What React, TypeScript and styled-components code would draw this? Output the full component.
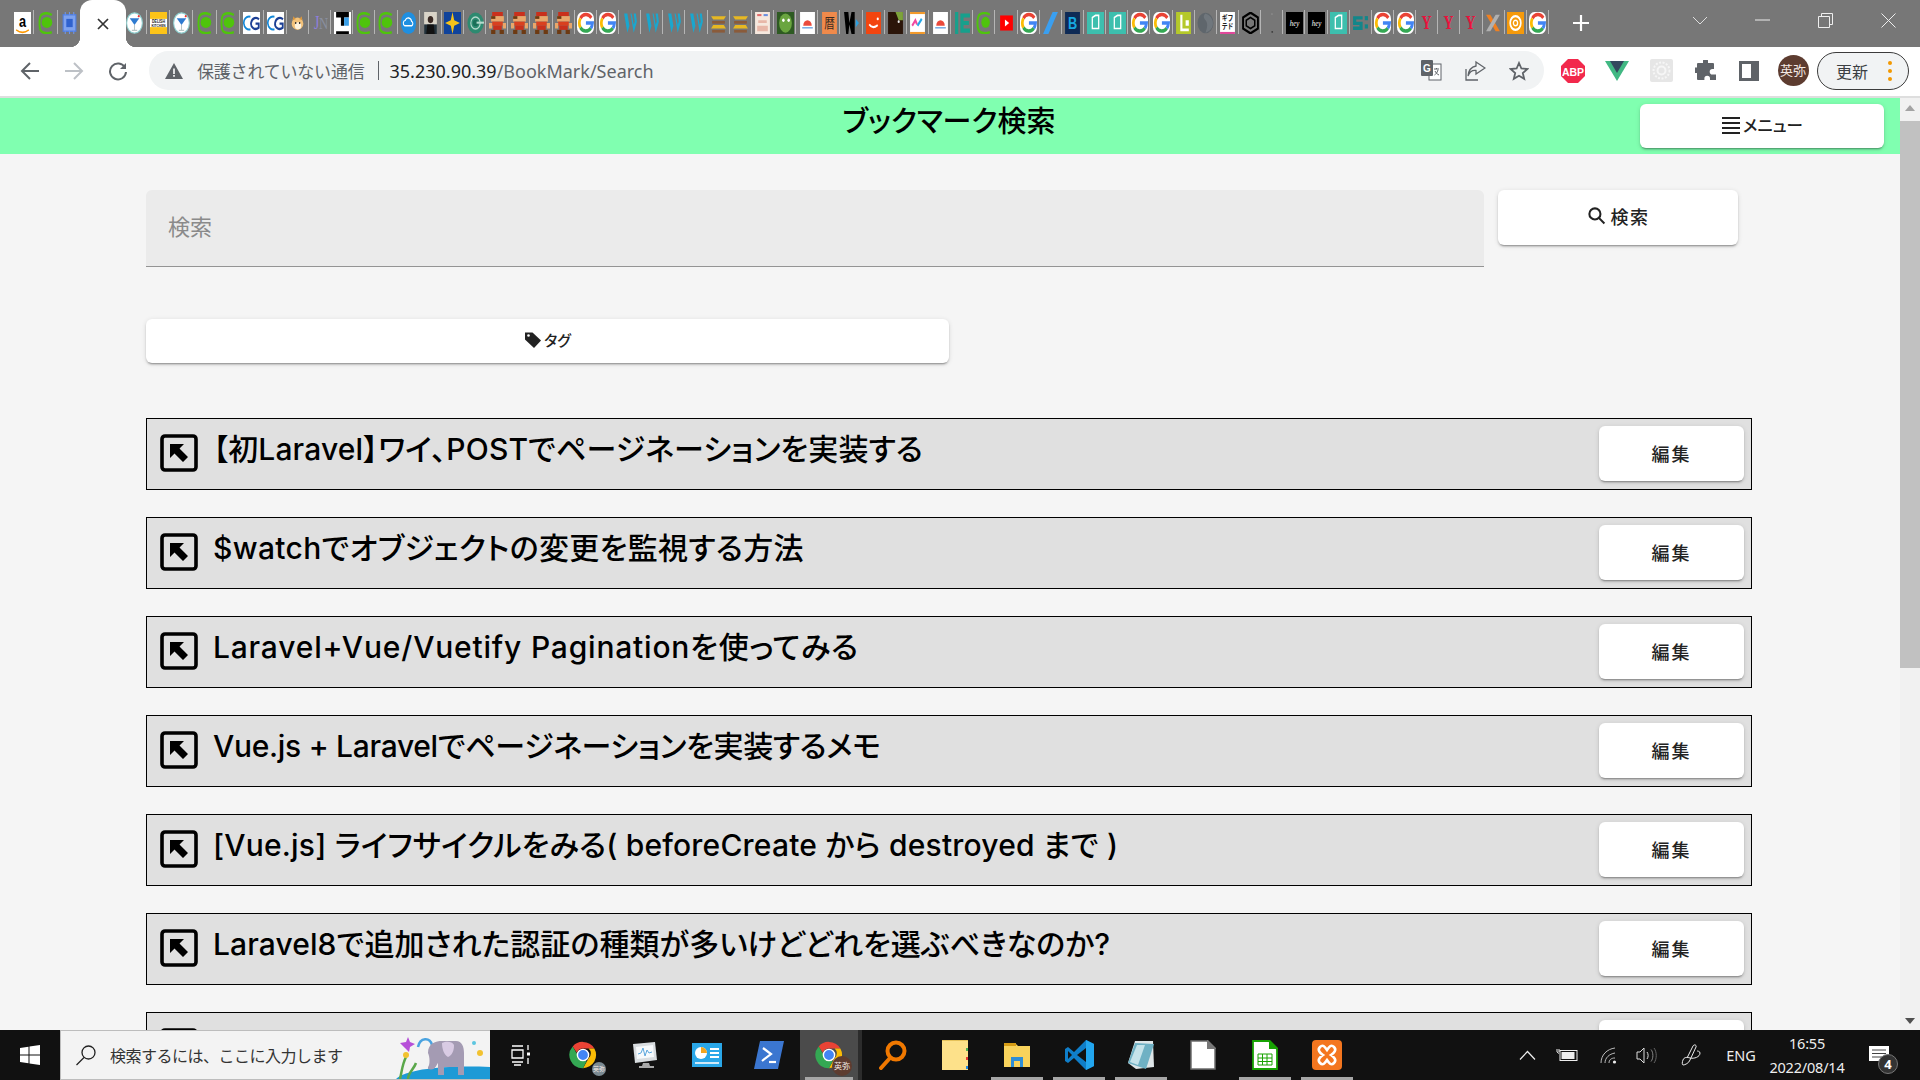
import * as React from 'react';
import styled, { createGlobalStyle } from 'styled-components';

const GlobalStyle = createGlobalStyle`
  html, body {
    margin: 0;
    padding: 0;
    height: 100%;
    overflow: hidden;
    font-family: "Noto Sans", "Noto Sans CJK JP", sans-serif;
  }
  * { box-sizing: border-box; }
`;

const Screen = styled.div`
  width: 1920px;
  height: 1080px;
  display: flex;
  flex-direction: column;
  overflow: hidden;
  background: #f5f5f5;
`;

/* ---- tab strip ---- */
const TabStrip = styled.div`
  height: 47px;
  flex: none;
  background: #777777;
  display: flex;
  padding-left: 11px;
  align-items: stretch;
`;

const Tab = styled.div<{ $w: number }>`
  width: ${p => p.$w}px;
  flex: none;
  display: flex;
  align-items: flex-start;
  justify-content: center;
  padding-top: 12px;
  position: relative;
  &::after {
    content: '';
    position: absolute;
    right: 0;
    top: 10px;
    width: 1px;
    height: 24px;
    background: #b5b5b5;
  }
  svg { display: block; }
`;

const ActiveTab = styled.div`
  width: 46px;
  flex: none;
  margin: 0 -3px 0 -1px;
  background: #fff;
  border-radius: 12px 12px 0 0;
  display: flex;
  align-items: center;
  justify-content: center;
  position: relative;
  z-index: 1;
  &::before, &::after {
    content: '';
    position: absolute;
    bottom: 0;
    width: 10px;
    height: 10px;
  }
  &::before {
    left: -10px;
    background: radial-gradient(circle at 0 0, transparent 10px, #fff 10.5px);
  }
  &::after {
    right: -10px;
    background: radial-gradient(circle at 100% 0, transparent 10px, #fff 10.5px);
  }
`;

const NewTab = styled.div`
  position: absolute;
  left: 1572px;
  top: 14px;
  width: 18px;
  height: 18px;
`;

const WindowButtons = styled.div`
  margin-left: auto;
  display: flex;
  align-items: flex-start;
`;

const WindowButton = styled.div`
  width: 63px;
  height: 40px;
  display: flex;
  align-items: center;
  justify-content: center;
`;

/* ---- address bar ---- */
const Toolbar = styled.div`
  height: 51px;
  flex: none;
  background: #fff;
  border-bottom: 2px solid #dedede;
  display: flex;
  align-items: center;
  padding-bottom: 2px;
`;

const NavButton = styled.div`
  width: 44px;
  height: 40px;
  flex: none;
  display: flex;
  align-items: center;
  justify-content: center;
`;

const NavGroup = styled.div`
  display: flex;
  padding-left: 8px;
  margin-right: 9px;
`;

const Omnibox = styled.div`
  width: 1395px;
  height: 39px;
  flex: none;
  background: #f1f3f4;
  border-radius: 20px;
  display: flex;
  align-items: center;
  padding: 0 3px 0 16px;
`;

const SecurityText = styled.span`
  font-size: 17px;
  color: #5f6368;
  margin-left: 14px;
  white-space: nowrap;
  letter-spacing: -0.2px;
`;

const Divider = styled.span`
  width: 1px;
  height: 19px;
  background: #5f6368;
  margin: 0 11px 0 13px;
`;

const UrlText = styled.span`
  font-size: 18px;
  color: #5f6368;
  white-space: nowrap;
  b { font-weight: 400; color: #202124; }
`;

const OmniIcons = styled.div`
  margin-left: auto;
  display: flex;
`;

const OmniIcon = styled.div`
  width: 44px;
  height: 32px;
  display: flex;
  align-items: center;
  justify-content: center;
`;

const ExtIcons = styled.div`
  display: flex;
  margin-left: 7px;
`;

const ExtIcon = styled.div`
  width: 44px;
  height: 40px;
  display: flex;
  align-items: center;
  justify-content: center;
`;

const Avatar = styled.div<{ $size: number; $font: number; $bg?: string }>`
  width: ${p => p.$size}px;
  height: ${p => p.$size}px;
  border-radius: 50%;
  background: ${p => p.$bg || '#5d3c30'};
  color: #f3e9e4;
  font-size: ${p => p.$font}px;
  display: flex;
  align-items: center;
  justify-content: center;
  white-space: nowrap;
  line-height: 1;
`;

const UpdatePill = styled.div`
  width: 92px;
  height: 38px;
  flex: none;
  margin-left: 2px;
  border: 1.5px solid #3c3c3c;
  border-radius: 19px;
  background: #f1f3f4;
  display: flex;
  align-items: center;
  padding-left: 18px;
  gap: 20px;
  font-size: 16px;
  color: #3c4043;
`;

const OrangeDots = styled.span`
  display: flex;
  flex-direction: column;
  gap: 4px;
  i {
    width: 4px;
    height: 4px;
    border-radius: 50%;
    background: #f29900;
    display: block;
  }
`;

/* ---- page ---- */
const Viewport = styled.div`
  flex: 1;
  min-height: 0;
  display: flex;
  overflow: hidden;
`;

const Page = styled.div`
  flex: 1;
  min-width: 0;
`;

const HeaderBar = styled.header`
  height: 56px;
  background: #80ffb0;
  position: relative;
  display: flex;
  justify-content: center;
`;

const HeaderTitle = styled.h1`
  margin: 0 0 0 -2px;
  font-size: 29px;
  font-weight: 500;
  line-height: 46px;
  color: #000;
  font-feature-settings: "palt";
`;

const raised = `
  background: #fff;
  border: none;
  border-radius: 6px;
  box-shadow: 0 3px 1px -2px rgba(0,0,0,.2), 0 2px 2px 0 rgba(0,0,0,.14), 0 1px 5px 0 rgba(0,0,0,.12);
  display: flex;
  align-items: center;
  justify-content: center;
  color: #222;
  font-family: inherit;
  flex: none;
`;

const MenuButton = styled.button`
  ${raised}
  position: absolute;
  right: 16px;
  top: 6px;
  width: 244px;
  height: 44px;
  padding: 0 0 2px;
  font-size: 16.5px;
  font-weight: 500;
  gap: 2px;
  font-feature-settings: "palt";
`;

const Content = styled.main`
  padding: 36px 148px 0 146px;
`;

const SearchRow = styled.div`
  display: flex;
  align-items: flex-start;
  gap: 14px;
`;

const SearchField = styled.div`
  width: 1338px;
  height: 77px;
  flex: none;
  background: #ebebeb;
  border-bottom: 1px solid #949494;
  border-radius: 6px 6px 0 0;
  padding: 0 22px 6px;
  display: flex;
  align-items: center;
  font-size: 22px;
  color: #8a8a8a;
`;

const SearchButton = styled.button`
  ${raised}
  width: 240px;
  height: 55px;
  padding: 0 0 4px;
  font-size: 18px;
  font-weight: 500;
  gap: 5px;
  letter-spacing: 1.500px;
`;

const TagButton = styled.button`
  ${raised}
  width: 803px;
  height: 44px;
  margin-top: 52px;
  padding: 0 0 3px;
  font-size: 15px;
  font-weight: 500;
  font-feature-settings: "palt";
  gap: 2px;
`;

const BookmarkList = styled.div`
  margin-top: 55px;
  width: 1606px;
  display: flex;
  flex-direction: column;
  gap: 27px;
`;

const BookmarkRow = styled.div`
  height: 72px;
  flex: none;
  background: #e0e0e0;
  border: 1px solid #000;
  display: flex;
  align-items: flex-start;
  padding: 7px 7px 0 13px;
`;

const LinkIcon = styled.svg`
  width: 38px;
  height: 38px;
  margin-top: 8px;
  flex: none;
`;

const BookmarkTitle = styled.div<{ $track: number }>`
  margin-left: 15px;
  padding-top: 1px;
  flex: 1;
  min-width: 0;
  font-family: "Inter", "Noto Sans CJK JP", sans-serif;
  font-size: 30px;
  font-weight: 500;
  line-height: 44px;
  color: #000;
  white-space: nowrap;
  font-feature-settings: "palt";
  letter-spacing: ${p => p.$track}px;
`;

const EditButton = styled.button`
  ${raised}
  width: 145px;
  height: 55px;
  padding: 0 0 2px;
  font-size: 18px;
  font-weight: 500;
  letter-spacing: 2px;
`;

/* ---- scrollbar ---- */
const Scrollbar = styled.div`
  width: 20px;
  flex: none;
  background: #f1f1f1;
  display: flex;
  flex-direction: column;
  align-items: center;
  justify-content: space-between;
  position: relative;
  padding: 7px 0 6px;
`;

const ScrollThumb = styled.div`
  position: absolute;
  left: 0;
  top: 23px;
  width: 20px;
  height: 547px;
  background: #c1c1c1;
`;

const ScrollArrow = styled.div<{ $down?: boolean }>`
  width: 0;
  height: 0;
  border-left: 5px solid transparent;
  border-right: 5px solid transparent;
  ${p => p.$down ? 'border-top: 6px solid #505050;' : 'border-bottom: 6px solid #a3a3a3;'}
`;

/* ---- taskbar ---- */
const Taskbar = styled.footer`
  height: 50px;
  flex: none;
  background: #111;
  display: flex;
  align-items: stretch;
  position: relative;
`;

const StartButton = styled.div`
  width: 60px;
  flex: none;
  display: flex;
  align-items: center;
  justify-content: center;
`;

const TaskSearch = styled.div`
  width: 430px;
  flex: none;
  background: #f3f3f3;
  border: 1px solid #bdbdbd;
  border-width: 1px 0 1px 1px;
  display: flex;
  align-items: center;
  padding-left: 14px;
  font-size: 16px;
  color: #333;
  position: relative;
  overflow: hidden;
  span { margin-left: 13px; letter-spacing: -0.5px; }
  svg.elephant { position: absolute; right: 0; bottom: 0; }
`;

const TaskItem = styled.div<{ $active?: boolean; $open?: boolean }>`
  width: 62px;
  flex: none;
  display: flex;
  align-items: center;
  justify-content: center;
  position: relative;
  background: ${p => p.$active ? '#4b4b4b' : 'transparent'};
  ${p => p.$active ? 'border-right: 4px solid #2c2c2c;' : ''}
  &::after {
    content: '';
    display: ${p => p.$open || p.$active ? 'block' : 'none'};
    position: absolute;
    left: 5px;
    right: 5px;
    bottom: 0;
    height: 3px;
    background: #a6a6a6;
  }
`;

const ChromeBadgeWrap = styled.div`
  position: relative;
  width: 30px;
  height: 30px;
`;

const BadgeAvatar = styled.div`
  position: absolute;
  right: -8px;
  bottom: -6px;
`;

const Tray = styled.div`
  margin-left: auto;
  display: flex;
  align-items: center;
  color: #eee;
  position: relative;
`;

const TrayIcon = styled.div<{ $w: number; $shift?: number }>`
  width: ${p => p.$w}px;
  height: 50px;
  margin-right: ${p => p.$shift || 0}px;
  display: flex;
  align-items: center;
  justify-content: center;
`;

const TrayLang = styled.div`
  width: 50px;
  margin-right: -2px;
  text-align: center;
  font-size: 14.5px;
  color: #eee;
`;

const Clock = styled.div`
  width: 96px;
  margin: 0 -1px 0 -5px;
  text-align: center;
  font-size: 14.5px;
  line-height: 24px;
  color: #eee;
  letter-spacing: -0.2px;
`;

const Notify = styled.div`
  width: 50px;
  height: 50px;
  position: relative;
  display: flex;
  align-items: center;
  justify-content: center;
`;

const NotifyBadge = styled.div`
  position: absolute;
  left: 24px;
  top: 24px;
  width: 20px;
  height: 20px;
  border-radius: 50%;
  background: #333;
  border: 1px solid #777;
  color: #fff;
  font-size: 13px;
  font-weight: 700;
  display: flex;
  align-items: center;
  justify-content: center;
`;

/* ---- favicons, deliberately squeezed like in the tab strip ---- */
const gIcon = (
  <>
    <rect width="16" height="16" rx="5" fill="#fff" />
    <path d="M13.5 4.2A6.5 6.5 0 0 0 3.2 4.6" fill="none" stroke="#ea4335" strokeWidth="2.6" />
    <path d="M3.2 4.6A6.5 6.5 0 0 0 3.2 11.4" fill="none" stroke="#fbbc05" strokeWidth="2.6" />
    <path d="M3.2 11.4A6.5 6.5 0 0 0 13 11.8" fill="none" stroke="#34a853" strokeWidth="2.6" />
    <path d="M13 11.8A6.5 6.5 0 0 0 14.6 8H8.4" fill="none" stroke="#4285f4" strokeWidth="2.6" />
  </>
);

const icons: Record<string, React.ReactNode> = {
  a: (
    <>
      <rect width="16" height="16" fill="#fff" />
      <text x="8" y="11" fontSize="12" fontWeight="700" textAnchor="middle" fill="#000" fontFamily="Liberation Sans">a</text>
      <path d="M2 13c4 2.4 8 2.4 12 0" fill="none" stroke="#f90" strokeWidth="1.2" />
    </>
  ),
  green: (
    <>
      <path d="M13 2.2C10 .4 5 .4 3 2.2 1 4 .8 12 3 14c2 1.8 7 1.6 10 .6" fill="none" stroke="#4fc40c" strokeWidth="1.8" />
      <ellipse cx="8.4" cy="7.6" rx="5" ry="4" fill="#4fc40c" />
    </>
  ),
  chip: (
    <>
      <rect x="2" y="2" width="12" height="12" fill="#7ea2ee" stroke="#4f7de0" />
      <rect x="5" y="5" width="6" height="6" fill="#2f62cf" />
      <path d="M4 0v2M8 0v2M12 0v2M4 14v2M8 14v2M12 14v2" stroke="#6f95ea" />
    </>
  ),
  cocktail: (
    <>
      <circle cx="8" cy="8" r="7.4" fill="#fff" stroke="#8fd0d0" />
      <path d="M3.5 4.5h9L8 9.5z" fill="#2f7bd0" />
      <path d="M8 9.5V13M5.5 13.4h5" stroke="#b9c6c6" />
      <circle cx="12" cy="3" r=".9" fill="#e33" />
    </>
  ),
  delish: (
    <>
      <rect width="16" height="16" fill="#fcc419" />
      <rect y="5" width="16" height="6" fill="#fff" />
      <text x="8" y="8" fontSize="3.4" fontWeight="700" textAnchor="middle" fill="#222" fontFamily="Liberation Sans">DELISH</text>
      <text x="8" y="10.8" fontSize="3" fontWeight="700" textAnchor="middle" fill="#222" fontFamily="Liberation Sans">KITCHEN</text>
    </>
  ),
  cg: (
    <>
      <rect width="16" height="16" fill="#fff" />
      <path d="M7 3.4C3 2.6.4 5.600.8 8.400 1.200 11.400 4 13.400 7 12.600" fill="none" stroke="#1187d8" strokeWidth="1.5" />
      <path d="M15 5.400C13 3.400 8.400 4 7.600 8c-.6 3.400 3.800 5.600 7.200 3.400V8.400h-3" fill="none" stroke="#1c3f94" strokeWidth="1.700" />
    </>
  ),
  cat: (
    <>
      <ellipse cx="8" cy="8.500" rx="5.500" ry="4.500" fill="#f3c27a" />
      <ellipse cx="8.500" cy="10" rx="3" ry="2.600" fill="#fff3dd" />
      <path d="M3.500 6 4 3l2.500 2zM12.500 6 12 3 9.500 5z" fill="#d8963e" />
      <circle cx="6.300" cy="8" r=".7" fill="#222" />
      <circle cx="10" cy="8" r=".7" fill="#222" />
    </>
  ),
  jn: (
    <>
      <text x="4.500" y="12.500" fontSize="13" textAnchor="middle" fill="#8f7fe0" fontFamily="Liberation Serif">J</text>
      <text x="11" y="12.500" fontSize="12" textAnchor="middle" fill="#8a8fa0" fontFamily="Liberation Serif">N</text>
    </>
  ),
  t: (
    <>
      <rect width="16" height="16" fill="#fff" />
      <path d="M2 0h12v1.500H2zM2 14h12v2H2z" fill="#000" />
      <path d="M2 1.500h12v2.500H9.500v6h-3V4H2z" fill="#000" />
      <path d="M9.500 4H14v6H9.500z" fill="#3a9fe8" />
    </>
  ),
  cloud: (
    <>
      <rect x="1" width="14" height="16" rx="7" fill="#1f8fe0" />
      <path d="M4.500 10a2 2 0 0 1 .4-3.900 3.200 3.200 0 0 1 6 .7 1.700 1.700 0 0 1 .1 3.200z" fill="none" stroke="#fff" />
    </>
  ),
  photo: (
    <>
      <rect x="2" width="12" height="16" fill="#d9d4c8" />
      <rect x="2" y="9" width="12" height="7" fill="#22303a" />
      <circle cx="8" cy="5.500" r="2.600" fill="#3a2a24" />
      <path d="M5 9h6l1 7H4z" fill="#111" />
    </>
  ),
  star: (
    <>
      <rect width="16" height="16" fill="#10439b" />
      <path d="M8 0l1.600 6L15 8l-5.400 2L8 16l-1.600-6L1 8l5.400-2z" fill="#f6c319" />
    </>
  ),
  tealc: (
    <>
      <circle cx="8" cy="8" r="7.600" fill="#2d8a70" />
      <circle cx="8" cy="8" r="4.400" fill="none" stroke="#b5d9cc" strokeWidth="1" />
      <circle cx="8" cy="8" r="2.400" fill="#1a6f58" />
      <rect x="9" y="7" width="7" height="1.500" fill="#b5d9cc" />
    </>
  ),
  mario: (
    <>
      <rect x="3" width="10" height="3" fill="#c9301c" />
      <rect x="2" y="3" width="12" height="4" fill="#e8a76b" />
      <rect x="2" y="3" width="4" height="2" fill="#6d3a12" />
      <rect x="3" y="7" width="10" height="3" fill="#d9401f" />
      <rect x="0" y="8" width="3" height="4" fill="#e8a76b" />
      <rect x="13" y="8" width="3" height="4" fill="#e8a76b" />
      <rect x="4" y="10" width="8" height="3" fill="#c9301c" />
      <rect x="2" y="13" width="4" height="3" fill="#6d3a12" />
      <rect x="10" y="13" width="4" height="3" fill="#6d3a12" />
    </>
  ),
  g: gIcon,
  w: <path d="M2 1l3 14 2-5-2-9zM8 1l3 14 3-8-1-6h-2l1 6-1 2-2-8z" fill="#19a7cf" />,
  burger: (
    <>
      <path d="M1 3h14l-2 2.500H3z" fill="#e7b822" />
      <path d="M2 6.500h12v2H2z" fill="#8a5b3a" />
      <path d="M3 9.500h10l2 2.500H1z" fill="#e7b822" />
      <path d="M2 13h12v2H2z" fill="#8a5b3a" />
    </>
  ),
  pink: (
    <>
      <rect x="1" width="14" height="16" fill="#f6e8de" />
      <path d="M3 1.500h4v1.500H3z" fill="#e06a6a" />
      <path d="M9 1.500h4v1.500H9z" fill="#6a8fe0" />
      <path d="M4 6h8v2H4zM3 10h10v4H3z" fill="#e8b7a8" />
    </>
  ),
  monster: (
    <>
      <rect width="16" height="16" fill="#2e5a22" />
      <ellipse cx="8" cy="8" rx="6" ry="7" fill="#6aa53f" />
      <circle cx="6" cy="6" r="1.200" fill="#fff" />
      <circle cx="11" cy="6" r="1.200" fill="#fff" />
    </>
  ),
  sunrise: (
    <>
      <rect x="1" width="14" height="16" fill="#fff" />
      <path d="M4 10a4 4 0 0 1 8 0z" fill="#ea4a3c" />
      <path d="M3 11.500h10" stroke="#6aa3e0" />
    </>
  ),
  koyomi: (
    <>
      <rect x="1" width="14" height="16" fill="#f08a4b" />
      <text x="8" y="12" fontSize="10" textAnchor="middle" fill="#3a2a20" fontFamily="Noto Sans CJK JP">暦</text>
    </>
  ),
  wblack: (
    <>
      <path d="M1 0h4l1 8 2-8h3v16H8L6 9l-1 7H3z" fill="#000" />
      <path d="M12 5l3 3-3 3z" fill="#2a9fe0" />
    </>
  ),
  smile: (
    <>
      <rect x="1" width="14" height="16" fill="#f3450f" />
      <path d="M4 9c2 2.500 5 2.500 8 .6" fill="none" stroke="#fff" strokeWidth="1.500" />
      <circle cx="12" cy="5" r="1" fill="#fff" />
    </>
  ),
  bear: (
    <>
      <rect x="1" width="14" height="16" fill="#2b1509" />
      <path d="M8 0h7v6H11z" fill="#7da33a" />
      <circle cx="11" cy="7" r="1" fill="#eee" />
    </>
  ),
  colour: (
    <>
      <rect x="1" width="14" height="16" fill="#fff" />
      <rect x="1" width="14" height="1.500" fill="#f39a2a" />
      <rect x="1" y="14.500" width="14" height="1.500" fill="#f39a2a" />
      <path d="M3 10l3-4 1.500 3" fill="none" stroke="#f04aa0" strokeWidth="1.800" />
      <path d="M8 10l4-5" fill="none" stroke="#25a7e8" strokeWidth="1.800" />
    </>
  ),
  e: (
    <>
      <path d="M1 0h3v16H1z" fill="#17a08c" />
      <path d="M6 1h9v3H9v2.500h5V9.500H9V12h6v3H6z" fill="#17a08c" />
    </>
  ),
  c: (
    <>
      <path d="M13 2C10 .4 5 .4 3 2.200.8 4.500.8 11.500 3 14c2 1.800 7 1.600 10 .6" fill="none" stroke="#4fc40c" strokeWidth="1.800" />
      <circle cx="9" cy="7.500" r="4" fill="#4fc40c" />
    </>
  ),
  yt: (
    <>
      <rect x="2" y="2.500" width="12" height="11" fill="#f00" />
      <path d="M6.500 5.500v5l4-2.500z" fill="#fff" />
    </>
  ),
  slash: <path d="M10 0h5L6 16H1z" fill="#3a9ff0" />,
  b: (
    <>
      <rect x="1" width="14" height="16" fill="#0e2a55" />
      <text x="8" y="12.500" fontSize="12" fontWeight="700" textAnchor="middle" fill="#17a8e0" fontFamily="Liberation Sans">B</text>
    </>
  ),
  doc: (
    <>
      <rect width="16" height="16" fill="#3dbfae" />
      <path d="M5 4l3-1.500h3V12H5z" fill="none" stroke="#fff" strokeWidth="1.200" />
    </>
  ),
  yg: (
    <>
      <rect x="1" width="14" height="16" fill="#b5c92a" />
      <path d="M5 2h2v10h6v2H5zM10 6h3v4h-3z" fill="#fff" />
    </>
  ),
  globe: (
    <>
      <circle cx="8" cy="8" r="7.500" fill="#5f666c" />
      <path d="M8 1c-3 2-1 4 0 5s3 3 0 9c5-1 7-4 7-7s-3-6-7-7z" fill="#70777d" />
    </>
  ),
  gift: (
    <>
      <rect x="1" width="14" height="16" fill="#fff" />
      <text x="8" y="6.500" fontSize="5.500" fontWeight="700" textAnchor="middle" fill="#222" fontFamily="Noto Sans CJK JP">ギフ</text>
      <text x="8" y="12.500" fontSize="5.500" fontWeight="700" textAnchor="middle" fill="#222" fontFamily="Noto Sans CJK JP">テド</text>
      <rect x="1" y="14.500" width="14" height="1.500" fill="#e0479a" />
    </>
  ),
  hex: (
    <>
      <path d="M8 .5 15 4v8l-7 3.500L1 12V4z" fill="none" stroke="#000" strokeWidth="1.800" />
      <path d="M8 4l4 2v4l-4 2-4-2V6z" fill="none" stroke="#000" strokeWidth="1.400" />
    </>
  ),
  dots: (
    <>
      <rect x="7" y="1" width="1" height="1" fill="#999" />
      <rect x="7" y="14" width="1.500" height="1" fill="#333" />
    </>
  ),
  hey: (
    <>
      <rect width="16" height="16" fill="#000" />
      <text x="8" y="10" fontSize="6.500" fontStyle="italic" textAnchor="middle" fill="#fff" fontFamily="Liberation Serif">hey</text>
    </>
  ),
  s: (
    <>
      <path d="M1 3h9v2.500H4v1.500h6v6H1v-2.500h6V9.500H1z" fill="#12868a" />
      <rect x="12" y="3" width="3" height="3" fill="#12868a" />
      <rect x="12" y="9" width="3" height="3" fill="#12868a" />
    </>
  ),
  y: <text x="7" y="12.500" fontSize="13" fontWeight="700" textAnchor="middle" fill="#e8123c" fontFamily="Liberation Serif">Y</text>,
  x: (
    <>
      <path d="M1 2h4l9 12h-4z" fill="#f08020" />
      <path d="M14 2h-4L1 14h4z" fill="#b0b0b0" />
    </>
  ),
  at: (
    <>
      <rect width="16" height="16" fill="#f59a0c" />
      <circle cx="8" cy="8" r="5" fill="none" stroke="#fff" strokeWidth="1.600" />
      <circle cx="8" cy="8" r="2" fill="none" stroke="#fff" strokeWidth="1.200" />
    </>
  ),
};

const Favicon = ({ kind }: { kind: string }) => (
  <svg width="17" height="22" viewBox="0 0 16 16" preserveAspectRatio="none">
    {icons[kind]}
  </svg>
);

const before = ['a', 'green', 'chip'];
const after = [
  'cocktail', 'delish', 'cocktail', 'green', 'green', 'cg', 'cg', 'cat', 'jn', 't',
  'green', 'green', 'cloud', 'photo', 'star', 'tealc', 'mario', 'mario', 'mario', 'mario',
  'g', 'g', 'w', 'w', 'w', 'w', 'burger', 'burger', 'pink', 'monster',
  'sunrise', 'koyomi', 'wblack', 'smile', 'bear', 'colour', 'sunrise', 'e', 'c', 'yt',
  'g', 'slash', 'b', 'doc', 'doc', 'g', 'g', 'yg', 'globe', 'gift',
  'hex', 'dots', 'hey', 'hey', 'doc', 's', 'g', 'g', 'y', 'y',
  'y', 'x', 'at', 'g',
];

// track: tracking per title, the original's latin runs are wider than Inter and its kana narrower
const bookmarks = [
  { title: '【初Laravel】ワイ、POSTでページネーションを実装する', track: 0.15 },
  { title: '$watchでオブジェクトの変更を監視する方法', track: 0.35 },
  { title: 'Laravel+Vue/Vuetify Paginationを使ってみる', track: 0.8 },
  { title: 'Vue.js + Laravelでページネーションを実装するメモ', track: -0.3 },
  { title: '[Vue.js] ライフサイクルをみる( beforeCreate から destroyed まで )', track: 0.2 },
  { title: 'Laravel8で追加された認証の種類が多いけどどれを選ぶべきなのか?', track: 0.1 },
  { title: '', track: 0 },
];

const MagnifierIcon = ({ size }: { size: number }) => (
  <svg width={size} height={size} viewBox="0 0 24 24" fill="none" stroke="#222" strokeWidth="2.600">
    <circle cx="10" cy="10" r="7" />
    <path d="M15 15l7 7" />
  </svg>
);

const ChromeLogo = () => (
  <svg width="30" height="30" viewBox="0 0 32 32">
    <path d="M16 2a14 14 0 0 1 12.100 7H16a7 7 0 0 0-6.600 4.600L5 6.800A14 14 0 0 1 16 2z" fill="#ea4335" />
    <path d="M28.100 9A14 14 0 0 1 16 30l6-10.500A7 7 0 0 0 22 9z" fill="#fbbc05" />
    <path d="M5 6.800l6 10.600A7 7 0 0 0 20 22l-4 8A14 14 0 0 1 5 6.800z" fill="#34a853" />
    <circle cx="16" cy="16" r="6" fill="#4285f4" stroke="#fff" strokeWidth="1.500" />
  </svg>
);

export default function App() {
  return (
    <Screen>
      <GlobalStyle />

      <TabStrip>
        {before.map((k, i) => (
          <Tab key={i} $w={23.4}><Favicon kind={k} /></Tab>
        ))}
        <ActiveTab>
          <svg width="14" height="14" viewBox="0 0 14 14" stroke="#333" strokeWidth="1.700">
            <path d="M2 2l10 10M12 2L2 12" />
          </svg>
        </ActiveTab>
        {after.map((k, i) => (
          <Tab key={i} $w={i < 7 ? 23.4 : 22.15}><Favicon kind={k} /></Tab>
        ))}
        <NewTab>
          <svg width="18" height="18" viewBox="0 0 18 18" stroke="#fff" strokeWidth="2.200">
            <path d="M9 1v16M1 9h16" />
          </svg>
        </NewTab>
        <WindowButtons>
          <WindowButton>
            <svg width="16" height="9" viewBox="0 0 16 9" fill="none" stroke="#ddd"><path d="M1 1l7 7 7-7" /></svg>
          </WindowButton>
          <WindowButton>
            <svg width="15" height="2" viewBox="0 0 15 2" stroke="#eee"><path d="M0 1h15" /></svg>
          </WindowButton>
          <WindowButton>
            <svg width="15" height="15" viewBox="0 0 15 15" fill="none" stroke="#eee"><path d="M.5 3.500h11v11H.500zM3.500 3.500v-3h11v11h-3" /></svg>
          </WindowButton>
          <WindowButton>
            <svg width="15" height="15" viewBox="0 0 15 15" stroke="#eee"><path d="M.5.500l14 14M14.500.500l-14 14" /></svg>
          </WindowButton>
        </WindowButtons>
      </TabStrip>

      <Toolbar>
        <NavGroup>
          <NavButton>
            <svg width="20" height="20" viewBox="0 0 20 20" fill="none" stroke="#5f6368" strokeWidth="2"><path d="M19 10H2M10 2l-8 8 8 8" /></svg>
          </NavButton>
          <NavButton>
            <svg width="20" height="20" viewBox="0 0 20 20" fill="none" stroke="#bdc1c6" strokeWidth="2"><path d="M1 10h17M10 2l8 8-8 8" /></svg>
          </NavButton>
          <NavButton>
            <svg width="20" height="20" viewBox="0 0 20 20" fill="none" stroke="#5f6368" strokeWidth="2">
              <path d="M17 6.500A8 8 0 1 0 18 11" />
              <path d="M18 2v6h-6" fill="#5f6368" stroke="none" />
            </svg>
          </NavButton>
        </NavGroup>
        <Omnibox>
          <svg width="18" height="16" viewBox="0 0 18 16"><path d="M9 0l9 16H0z" fill="#5f6368" /><path d="M8.200 5.500h1.600v5.500H8.200zM8.200 12h1.600v1.700H8.200z" fill="#fff" /></svg>
          <SecurityText>保護されていない通信</SecurityText>
          <Divider />
          <UrlText><b>35.230.90.39</b>/BookMark/Search</UrlText>
          <OmniIcons>
            <OmniIcon>
              <svg width="21" height="21" viewBox="0 0 21 21">
                <rect x="8" y="4" width="12" height="16" fill="#fff" stroke="#5f6368" />
                <rect x="0" y="0" width="12" height="16" rx="1" fill="#5f6368" />
                <text x="6" y="12" fontSize="10" fontWeight="700" textAnchor="middle" fill="#fff" fontFamily="Liberation Sans">G</text>
                <path d="M13 9h5M15.500 8v1M17 10c-1 3-2 4-3.500 5M14 11c1 2 2 3 4 4" stroke="#5f6368" fill="none" />
              </svg>
            </OmniIcon>
            <OmniIcon>
              <svg width="21" height="21" viewBox="0 0 21 21" fill="none" stroke="#5f6368" strokeWidth="1.300">
                <path d="M1 9v11h12" />
                <path d="M11 2l9 6-9 6v-3.500C7 10 4.500 12 3 16c.5-5 3-9 8-10z" />
              </svg>
            </OmniIcon>
            <OmniIcon>
              <svg width="20" height="20" viewBox="0 0 20 20" fill="none" stroke="#5f6368" strokeWidth="1.800">
                <path d="M10 2l2.400 5.500 6 .5-4.600 4 1.400 5.800L10 14.800 4.800 17.800 6.200 12 1.600 8l6-.5z" />
              </svg>
            </OmniIcon>
          </OmniIcons>
        </Omnibox>
        <ExtIcons>
          <ExtIcon>
            <svg width="24" height="24" viewBox="0 0 24 24">
              <path d="M7 0h10l7 7v10l-7 7H7l-7-7V7z" fill="#f2294c" />
              <text x="12" y="16.500" fontSize="10.500" fontWeight="700" textAnchor="middle" fill="#fff" fontFamily="Liberation Sans">ABP</text>
            </svg>
          </ExtIcon>
          <ExtIcon>
            <svg width="24" height="20" viewBox="0 0 24 20">
              <path d="M0 0h24L12 20z" fill="#41b883" />
              <path d="M5 0h14l-7 12z" fill="#34495e" />
            </svg>
          </ExtIcon>
          <ExtIcon>
            <svg width="23" height="23" viewBox="0 0 23 23">
              <rect width="23" height="23" rx="2" fill="#e6e6e6" />
              <circle cx="11.500" cy="11.500" r="8" fill="none" stroke="#f6f6f6" strokeWidth="2" strokeDasharray="2 1.500" />
              <circle cx="11.500" cy="11.500" r="4" fill="none" stroke="#f6f6f6" strokeWidth="2" />
            </svg>
          </ExtIcon>
          <ExtIcon>
            <svg width="21" height="21" viewBox="0 0 21 21" fill="#5f6368">
              <path d="M8 1a2.500 2.500 0 0 1 5 0v2h5a1 1 0 0 1 1 1v5h-1.500a2.800 2.800 0 0 0 0 5.600H21V20H15v-1.500a2.800 2.800 0 0 0-5.600 0V20H3a1 1 0 0 1-1-1v-6H1a2.800 2.800 0 0 1 0-5.600h1V4a1 1 0 0 1 1-1h5z" />
            </svg>
          </ExtIcon>
          <ExtIcon>
            <svg width="20" height="20" viewBox="0 0 20 20">
              <rect width="20" height="20" fill="#5f6368" />
              <rect x="3" y="3" width="9" height="14" fill="#fff" />
            </svg>
          </ExtIcon>
          <ExtIcon>
            <Avatar $size={31} $font={13}>英弥</Avatar>
          </ExtIcon>
        </ExtIcons>
        <UpdatePill>
          <span>更新</span>
          <OrangeDots><i /><i /><i /></OrangeDots>
        </UpdatePill>
      </Toolbar>

      <Viewport>
        <Page>
          <HeaderBar>
            <HeaderTitle>ブックマーク検索</HeaderTitle>
            <MenuButton>
              <svg width="20" height="18" viewBox="0 0 20 18" stroke="#222" strokeWidth="2"><path d="M1 2h18M1 7h18M1 12h18M1 17h18" /></svg>
              メニュー
            </MenuButton>
          </HeaderBar>
          <Content>
            <SearchRow>
              <SearchField>検索</SearchField>
              <SearchButton><MagnifierIcon size={19} />検索</SearchButton>
            </SearchRow>
            <TagButton>
              <svg width="18" height="18" viewBox="0 0 18 18" fill="#222">
                <path d="M1 1.500h7.500L17 9.500 10 17 1 8.500z" />
                <circle cx="4.500" cy="4.500" r="1.300" fill="#fff" />
              </svg>
              タグ
            </TagButton>
            <BookmarkList>
              {bookmarks.map((b, i) => (
                <BookmarkRow key={i}>
                  <LinkIcon viewBox="0 0 38 38">
                    <rect x="2" y="2" width="34" height="34" rx="3" fill="none" stroke="#000" strokeWidth="3.600" />
                    <path d="M10 10h14l-4.500 4.500L28 23l-5 5-8.500-8.500L10 24z" fill="#000" />
                  </LinkIcon>
                  <BookmarkTitle $track={b.track}>{b.title}</BookmarkTitle>
                  <EditButton>編集</EditButton>
                </BookmarkRow>
              ))}
            </BookmarkList>
          </Content>
        </Page>
        <Scrollbar>
          <ScrollArrow />
          <ScrollThumb />
          <ScrollArrow $down />
        </Scrollbar>
      </Viewport>

      <Taskbar>
        <StartButton>
          <svg width="20" height="20" viewBox="0 0 20 20" fill="#fff">
            <path d="M0 3l8.500-1.200V9.500H0zM9.500 1.600 20 0v9.500H9.500zM0 10.500h8.500v7.700L0 17zM9.500 10.500H20V20L9.500 18.400z" />
          </svg>
        </StartButton>
        <TaskSearch>
          <svg width="22" height="22" viewBox="0 0 22 22" fill="none" stroke="#222" strokeWidth="1.300">
            <circle cx="13.500" cy="8.500" r="6.500" />
            <path d="M9 13.500 1.500 21" />
          </svg>
          <span>検索するには、ここに入力します</span>
          <svg className="elephant" width="96" height="48" viewBox="0 0 96 48">
            <path d="M2 48c10-10 50-14 94-12v12z" fill="#1d9ad6" />
            <path d="M6 48c2-8 2-14 6-22M14 48c0-6 6-10 8-16" stroke="#5aa74a" strokeWidth="2.500" fill="none" />
            <circle cx="12" cy="24" r="3" fill="#f2c230" />
            <circle cx="86" cy="22" r="3" fill="#f2c230" />
            <path d="M6 12l6-1 2-5 2 5 5 2-5 3-1 5-4-4z" fill="#b64fd8" />
            <path d="M24 16c2-10 12-10 14-2" stroke="#4aa3e0" strokeWidth="2.500" fill="none" />
            <path d="M34 36c2-2 2-10 0-14 0-10 8-12 14-12h14c6 0 8 6 8 12v22h-6v-8h-14v8h-6v-12c-2 2-2 8-10 6z" fill="#a49bb3" />
            <path d="M48 12c4-2 10-2 12 2 0 6-2 10-6 12-4-2-6-8-6-14z" fill="#d9cbe4" />
            <circle cx="80" cy="12" r="2" fill="#5cc6e0" />
          </svg>
        </TaskSearch>
        <TaskItem>
          <svg width="20" height="22" viewBox="0 0 20 22" stroke="#fff" strokeWidth="1.300" fill="none">
            <path d="M1 6h11v8H1zM1 2h11M1 18h11M17 1v5M17 14v6M3 21h7" />
            <rect x="16" y="8.500" width="3" height="3" fill="#fff" stroke="none" />
          </svg>
        </TaskItem>
        <TaskItem>
          <ChromeBadgeWrap>
            <ChromeLogo />
            <BadgeAvatar><Avatar $size={14} $font={6} $bg="#7b8a92">英弥</Avatar></BadgeAvatar>
          </ChromeBadgeWrap>
        </TaskItem>
        <TaskItem>
          <svg width="30" height="30" viewBox="0 0 30 30">
            <path d="M3 4l22-2 2 18-22 3z" fill="#d9dde0" />
            <path d="M6 7l17-2 1 12-17 2z" fill="#f7fafc" />
            <path d="M8 14l3-1 2-5 2 8 2-6 2 3 3-1" fill="none" stroke="#5ba6dd" />
            <path d="M13 23h6l1 3h4v2H9v-2h3z" fill="#a8a8a8" />
          </svg>
        </TaskItem>
        <TaskItem>
          <svg width="30" height="24" viewBox="0 0 30 24">
            <rect width="30" height="24" fill="#2aa7e8" />
            <circle cx="9" cy="10" r="6" fill="#fff" />
            <path d="M9 10V4a6 6 0 0 1 6 6z" fill="#f2a51f" />
            <path d="M18 6h9M18 10h9M18 14h9" stroke="#fff" strokeWidth="2" />
            <rect x="3" y="19" width="24" height="2" fill="#cfe9f8" />
          </svg>
        </TaskItem>
        <TaskItem>
          <svg width="30" height="28" viewBox="0 0 30 28">
            <path d="M6 0h24l-6 28H0z" fill="#3b76d0" />
            <path d="M9 7l8 6-9 7" fill="none" stroke="#fff" strokeWidth="2.200" />
            <path d="M15 21h7" stroke="#fff" strokeWidth="2.200" />
          </svg>
        </TaskItem>
        <TaskItem $active>
          <ChromeBadgeWrap>
            <ChromeLogo />
            <BadgeAvatar><Avatar $size={20} $font={8}>英弥</Avatar></BadgeAvatar>
          </ChromeBadgeWrap>
        </TaskItem>
        <TaskItem>
          <svg width="28" height="30" viewBox="0 0 28 30" fill="none" stroke="#f07800" strokeWidth="4">
            <circle cx="17" cy="11" r="8.500" />
            <path d="M11 18 2 28" strokeLinecap="round" />
          </svg>
        </TaskItem>
        <TaskItem>
          <svg width="26" height="30" viewBox="0 0 26 30">
            <rect width="26" height="30" fill="#fde18a" />
            <rect x="0" width="26" height="1" fill="#e6c25a" />
            <rect x="24" y="8" width="2" height="3" fill="#4caf50" />
            <rect x="24" y="17" width="2" height="3" fill="#e53935" />
            <rect x="24" y="26" width="2" height="3" fill="#1e88e5" />
          </svg>
        </TaskItem>
        <TaskItem $open>
          <svg width="28" height="26" viewBox="0 0 28 26">
            <path d="M1 1h11l3 3h12v21H1z" fill="#f9d35c" />
            <rect x="1" y="1" width="12" height="3" fill="#d69c15" />
            <path d="M8 15h12v10h-3v-6h-6v6H8z" fill="#2f8ed6" />
          </svg>
        </TaskItem>
        <TaskItem $open>
          <svg width="30" height="30" viewBox="0 0 30 30">
            <path d="M22 0l8 4v22l-8 4-12-12-6 5-3-2V9l3-2 6 5z" fill="#0f7ec9" />
            <path d="M22 0l8 4v22l-8 4z" fill="#22a6ef" />
            <path d="M22 8v14l-9-7z" fill="#111" />
            <path d="M4 11v8l4-4z" fill="#111" />
          </svg>
        </TaskItem>
        <TaskItem $open>
          <svg width="28" height="30" viewBox="0 0 28 30">
            <path d="M8 1h18l1 26-18 2-8-6z" fill="#dfe6e8" />
            <path d="M8 3 1 23l18 6L27 4z" fill="#6fb1c4" />
            <path d="M10 5 3 22l8 3 7-20z" fill="#c5e3ea" />
          </svg>
        </TaskItem>
        <TaskItem>
          <svg width="26" height="30" viewBox="0 0 26 30">
            <path d="M1 1h16l8 8v20H1z" fill="#fff" stroke="#6d6d6d" strokeWidth="1.500" />
            <path d="M17 0h1l8 8v1h-9z" fill="#777" />
          </svg>
        </TaskItem>
        <TaskItem $open>
          <svg width="26" height="30" viewBox="0 0 26 30">
            <path d="M1 1h16l8 8v20H1z" fill="#fff" stroke="#18a303" strokeWidth="1.800" />
            <path d="M17 0h1l8 8v1h-9z" fill="#18a303" />
            <path d="M6 14h14v11H6zM6 18h14M6 21.500h14M10.500 14v11M15 14v11" fill="none" stroke="#18a303" strokeWidth="1" />
          </svg>
        </TaskItem>
        <TaskItem $open>
          <svg width="30" height="30" viewBox="0 0 30 30">
            <rect width="30" height="30" rx="4" fill="#f4761f" />
            <path d="M8 7c3-3 5 0 7 3 2-3 4-6 7-3s0 6-3 8c3 2 6 5 3 8s-5 0-7-3c-2 3-4 6-7 3s0-6 3-8c-3-2-6-5-3-8z" fill="none" stroke="#fff" strokeWidth="2.600" />
          </svg>
        </TaskItem>
        <Tray>
          <TrayIcon $w={40} $shift={-1}>
            <svg width="17" height="10" viewBox="0 0 17 10" fill="none" stroke="#eee" strokeWidth="1.200"><path d="M1 9.500l7.500-8 7.500 8" /></svg>
          </TrayIcon>
          <TrayIcon $w={42}>
            <svg width="22" height="14" viewBox="0 0 22 14" stroke="#eee" fill="none">
              <rect x="4" y="2.500" width="17" height="10" />
              <rect x="5.500" y="4" width="13" height="7" fill="#eee" stroke="none" />
              <path d="M1 1v3l2 1.500M3 1v3" />
            </svg>
          </TrayIcon>
          <TrayIcon $w={40} $shift={-2}>
            <svg width="17" height="17" viewBox="0 0 17 17" fill="none" stroke="#bbb">
              <path d="M1 16C1 8 7 2 15 1M5 16c0-5 4-9 10-10M9 16c0-3 2-5 6-5" />
              <circle cx="14.500" cy="15" r="1.600" fill="#eee" stroke="none" />
            </svg>
          </TrayIcon>
          <TrayIcon $w={40}>
            <svg width="21" height="17" viewBox="0 0 21 17" fill="none" stroke="#ddd">
              <path d="M1 5h3l4-4v15l-4-4H1z" />
              <path d="M11 5c1.500 2 1.500 5 0 7" />
              <path d="M15 2.500c2.500 3 2.500 9 0 12" stroke="#888" />
              <path d="M18 1c3 4 3 11 0 15" stroke="#666" />
            </svg>
          </TrayIcon>
          <TrayIcon $w={50}>
            <svg width="21" height="22" viewBox="0 0 21 22" fill="none" stroke="#eee">
              <path d="M6 14 12 2c1-2 4-1 3 1L9 16c-1 3-5 5-7 5-1 0-1-3 0-5 1-3 4-3 7-2 4 1 10-1 10-5 0-2-3-2-3-2" />
            </svg>
          </TrayIcon>
          <TrayLang>ENG</TrayLang>
          <Clock>16:55<br />2022/08/14</Clock>
          <Notify>
            <svg width="20" height="18" viewBox="0 0 20 18">
              <path d="M0 0h20v15H0z" fill="#fff" />
              <path d="M3 4h14M3 7.500h14M3 11h14" stroke="#444" />
            </svg>
            <NotifyBadge>4</NotifyBadge>
          </Notify>
          <TrayIcon $w={16} />
        </Tray>
      </Taskbar>
    </Screen>
  );
}
